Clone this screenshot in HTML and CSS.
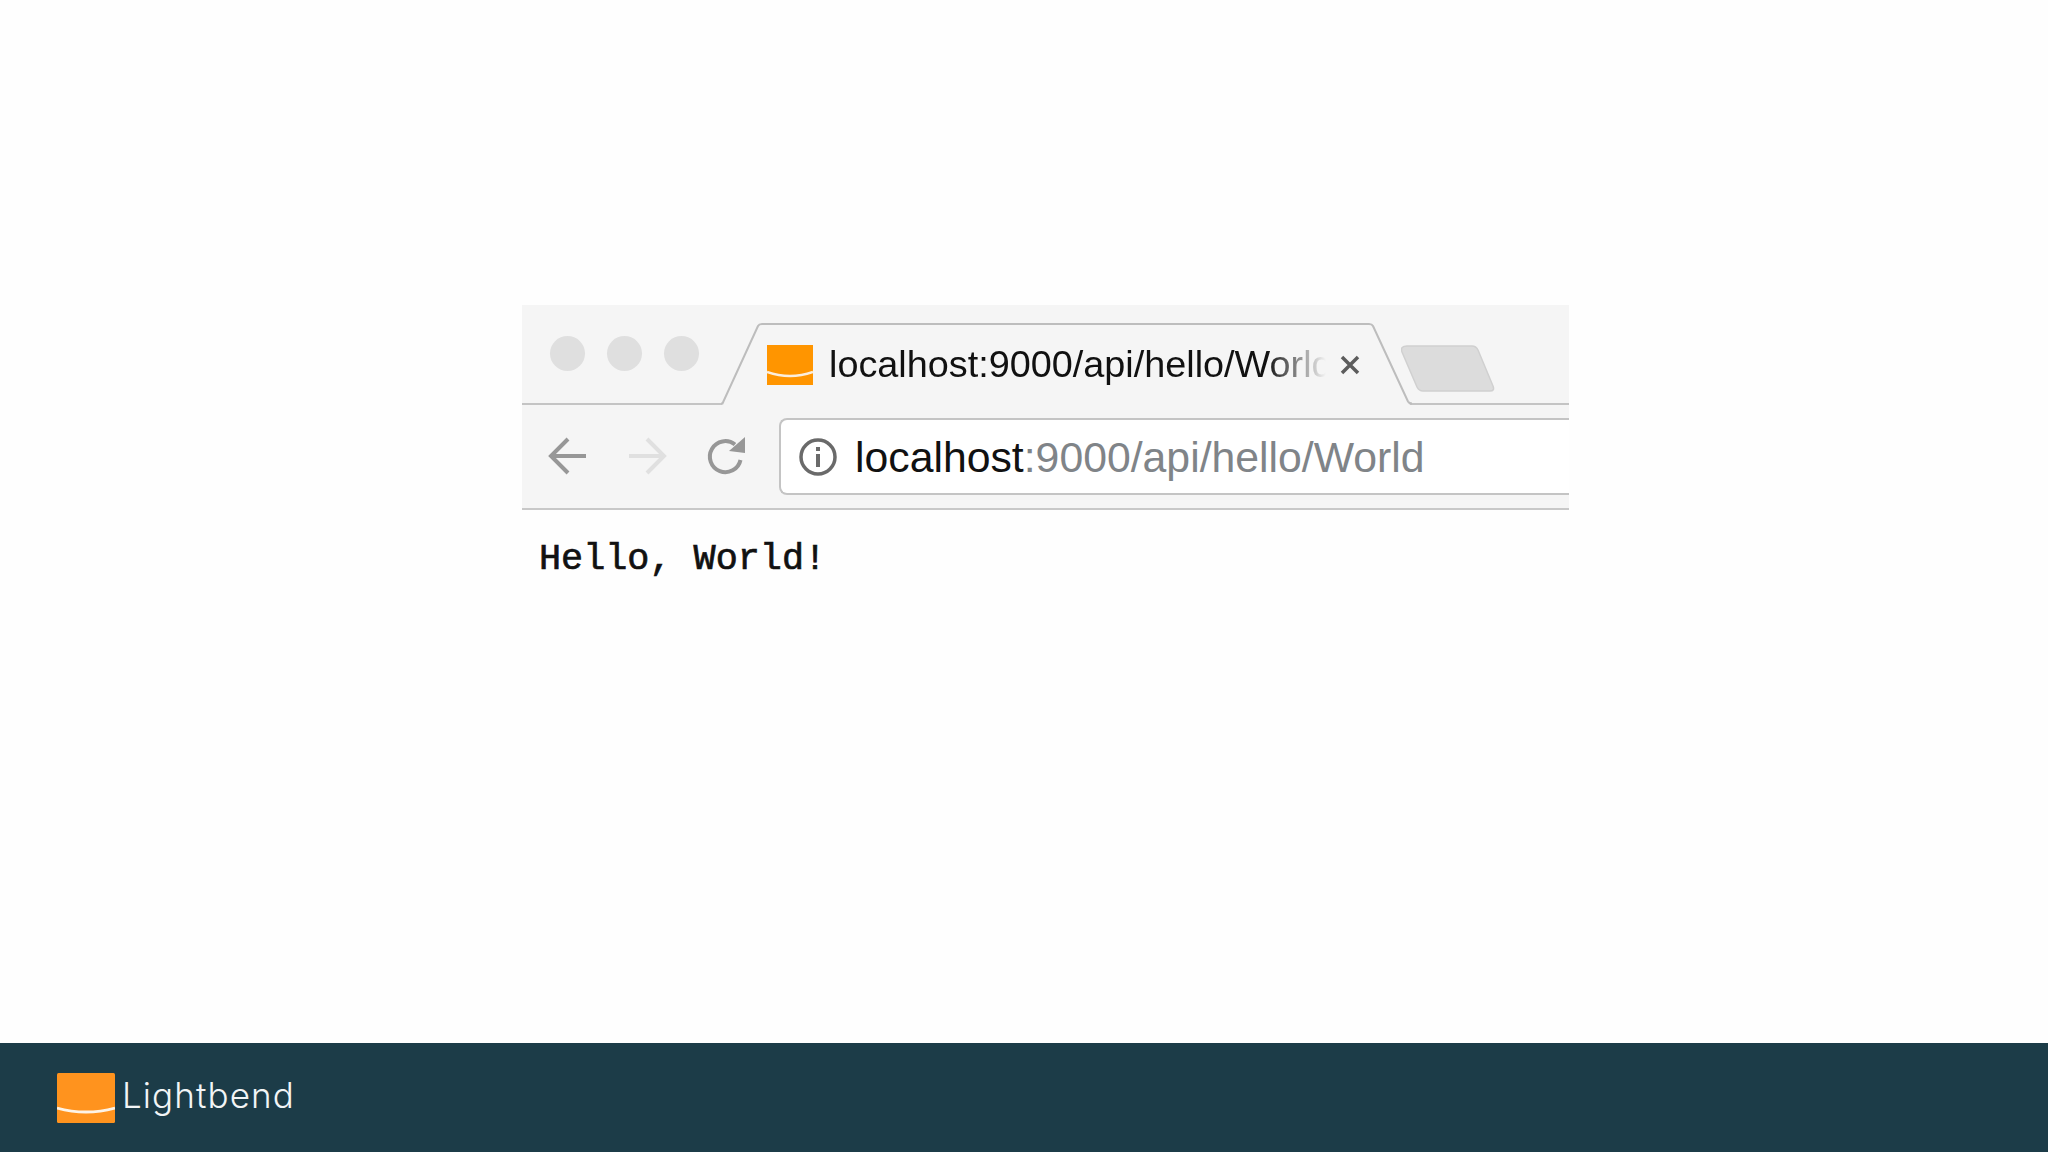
FILE: index.html
```html
<!DOCTYPE html>
<html lang="en">
<head>
<meta charset="utf-8">
<title>localhost:9000/api/hello/World</title>
<link rel="stylesheet" href="styles.css">
</head>
<body>
<div class="slide">
  <main class="stage">
    <section class="browser">
      <div class="tabstrip">
        <div class="lights"><span class="light"></span><span class="light"></span><span class="light"></span></div>
        <div class="tab">
          <svg class="tab-shape" width="692" height="82" viewBox="0 0 692 82">
            <path d="M1 82L37 3Q38 1 41 1H648Q651 1 652 3L689 82Z" fill="#f5f5f5"/>
            <path d="M0 80.500H1.500L37 3Q38 1 41 1H648Q651 1 652 3L687 78.500Q688 80.500 691 80.500" fill="none" stroke="#bdbdbd" stroke-width="2"/>
          </svg>
          <svg class="favicon" width="46" height="40" viewBox="0 0 46 40">
            <rect width="46" height="40" fill="#ff9500"/>
            <path d="M0 27Q23 35 46 27" fill="none" stroke="#fbeedd" stroke-width="2.500"/>
          </svg>
          <span class="tab-title">localhost:9000/api/hello/World</span>
          <svg class="tab-close" width="20" height="20" viewBox="0 0 20 20">
            <path d="M2 2L18 18M18 2L2 18" stroke="#5c5c5c" stroke-width="3.500"/>
          </svg>
        </div>
        <svg class="newtab" width="94" height="47" viewBox="0 0 94 47">
          <path d="M6 1H71Q75 1 77 5L92 41Q94 46 89 46H22Q18 46 16 42L1 7Q-1 1 6 1Z" fill="#dcdcdc" stroke="#d0d0d0" stroke-width="1.500"/>
        </svg>
      </div>
      <div class="toolbar">
        <svg class="nav-icon" width="40" height="40" viewBox="0 0 40 40">
          <path d="M38 20H4M20 3L3 20L20 37" fill="none" stroke="#979797" stroke-width="4"/>
        </svg>
        <svg class="nav-icon" width="40" height="40" viewBox="0 0 40 40">
          <path d="M2 20H36M20 3L37 20L20 37" fill="none" stroke="#e0e0e0" stroke-width="4"/>
        </svg>
        <svg class="nav-icon" width="40" height="40" viewBox="0 0 40 40">
          <path d="M34.500 24A15.500 15.500 0 1 1 29 8.500" fill="none" stroke="#979797" stroke-width="4"/>
          <path d="M23 15L39 1V17Z" fill="#979797"/>
        </svg>
        <div class="urlbar">
          <svg class="info" width="38" height="38" viewBox="0 0 38 38">
            <circle cx="19" cy="19" r="17" fill="none" stroke="#6a6a6a" stroke-width="3.500"/>
            <rect x="17" y="16" width="4" height="13" fill="#6a6a6a"/>
            <rect x="17" y="9" width="4" height="4" fill="#6a6a6a"/>
          </svg>
          <span class="url"><span class="url-host">localhost</span>:9000/api/hello/World</span>
        </div>
      </div>
      <div class="content">Hello, World!</div>
    </section>
  </main>
  <footer class="footer">
    <svg class="logo" width="58" height="50" viewBox="0 0 58 50">
      <rect width="58" height="50" rx="1.500" fill="#ff931e"/>
      <path d="M0 35Q29 43 58 35" fill="none" stroke="#fdf3e6" stroke-width="2.800"/>
    </svg>
    <span class="brand">Lightbend</span>
  </footer>
</div>
</body>
</html>
```
FILE: styles.css
```css
* { box-sizing: border-box; }
html, body { margin: 0; padding: 0; background: #fefefe; }
.slide { width: 2048px; height: 1152px; display: flex; flex-direction: column; overflow: hidden; }
.stage { flex: 1; padding: 305px 0 0 522px; }
.browser { width: 1047px; }

.tabstrip { height: 100px; background: #f5f5f5; display: flex; align-items: flex-start; position: relative; overflow: hidden; }
.tabstrip::after { content: ""; position: absolute; left: 0; right: 0; bottom: 0; height: 2px; background: #c4c4c4; }
.lights { display: flex; gap: 22px; margin: 31px 0 0 28px; }
.light { width: 35px; height: 35px; border-radius: 50%; background: #dfdfdf; }
.tab { position: relative; z-index: 1; width: 690px; height: 82px; margin: 18px 0 0 22px; display: flex; align-items: flex-start; padding: 22px 0 0 46px; }
.tab-shape { position: absolute; left: 0; top: 0; }
.favicon, .tab-title, .tab-close { position: relative; }
.favicon { flex: none; }
.tab-title { width: 497px; flex: none; margin-left: 16px; margin-top: -7px; font: 37.800px/52px "Liberation Sans", Arial, sans-serif; color: #111; white-space: nowrap; overflow: hidden; -webkit-mask-image: linear-gradient(to right, #000 88%, transparent 100%); mask-image: linear-gradient(to right, #000 88%, transparent 100%); }
.tab-close { flex: none; margin: 10px 0 0 14px; }
.newtab { position: relative; z-index: 1; flex: none; margin: 40px 0 0 -10px; }

.toolbar { height: 105px; background: #f5f5f5; border-bottom: 2px solid #c8c8c8; display: flex; align-items: center; padding-left: 26px; }
.nav-icon { flex: none; margin: -2px 39px 0 0; }
.nav-icon:nth-child(3) { margin-right: 33px; }
.urlbar { flex: 1; height: 77px; background: #fff; border: 2px solid #c4c4c4; border-right: 0; border-radius: 8px 0 0 8px; display: flex; align-items: center; padding-left: 18px; }
.info { flex: none; }
.url { margin: 2px 0 0 18px; font: 42.750px/1 "Liberation Sans", Arial, sans-serif; color: #808488; white-space: nowrap; }
.url-host { color: #111; }

.content { padding: 27px 0 0 17px; font: 400 36.800px/44px "Liberation Mono", "Courier New", monospace; color: #111; -webkit-text-stroke: 0.7px #111; }

.footer { flex: none; height: 109px; background: #1c3c48; display: flex; align-items: center; padding-left: 57px; gap: 7px; }
.logo { flex: none; }
.brand { font: 300 35px/1 Inter, sans-serif; letter-spacing: 1.100px; color: #f2f5f6; position: relative; top: -2px; }
```
